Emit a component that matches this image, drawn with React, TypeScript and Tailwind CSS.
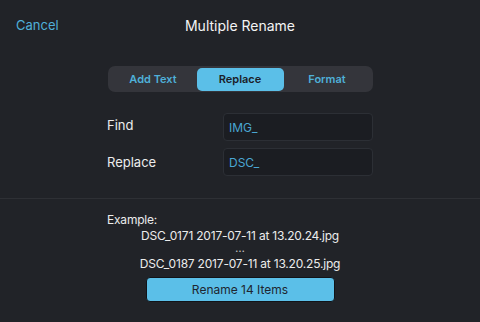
import { useState } from "react";

const tabs = ["Add Text", "Replace", "Format"];

export default function App() {
	const [active, setActive] = useState("Replace");
	const [find, setFind] = useState("IMG_");
	const [replace, setReplace] = useState("DSC_");

	return (
		<div
			className="flex h-[322px] w-[480px] flex-col bg-[#212328] text-white"
			style={{ fontFamily: "Inter, 'Noto Sans', sans-serif" }}
		>
			{/* header */}
			<div className="relative flex h-[50px] items-center justify-center">
				<button type="button" className="absolute left-[16px] top-[16px] text-[13px] text-[#4fb0d8]">
					Cancel
				</button>
				<h1 className="text-[14px] font-normal text-[#f4f4f4]">Multiple Rename</h1>
			</div>

			{/* segmented control */}
			<div className="mt-[16px] flex justify-center">
				<div className="flex h-[26px] w-[265px] items-center rounded-[7px] bg-[#34353b] p-[2px]">
					{tabs.map((t) => (
						<button
							key={t}
							type="button"
							onClick={() => setActive(t)}
							className={
								t === active
									? "h-[23px] flex-1 rounded-[5px] bg-[#5bbfe8] text-[11px] font-semibold text-[#1c2128]"
									: "h-[23px] flex-1 rounded-[5px] text-[11px] font-semibold text-[#4fb0d8]"
							}
						>
							{t}
						</button>
					))}
				</div>
			</div>

			{/* fields */}
			<div className="mx-auto mt-[21px] flex w-[266px] flex-col gap-[7px]">
				<div className="flex items-center justify-between">
					<span className="-mt-[3px] text-[13px] text-[#ececec]">Find</span>
					<input
						value={find}
						onChange={(e) => setFind(e.target.value)}
						className="h-[28px] w-[150px] rounded-[4px] border border-[#2c2f35] bg-[#1b1d22] px-[5px] text-[12px] text-[#4aa6d2] outline-none"
					/>
				</div>
				<div className="flex items-center justify-between">
					<span className="mt-[2px] text-[13px] text-[#ececec]">Replace</span>
					<input
						value={replace}
						onChange={(e) => setReplace(e.target.value)}
						className="h-[28px] w-[150px] rounded-[4px] border border-[#2c2f35] bg-[#1b1d22] px-[5px] text-[12px] text-[#4aa6d2] outline-none"
					/>
				</div>
			</div>

			<div className="mt-[22px] h-px w-full bg-[#2e3035]" />

			{/* example */}
			<div className="mx-auto mt-[13px] flex w-[266px] flex-col text-[12px] tracking-[-0.2px] text-[#ececec]">
				<span className="leading-[16px]">Example:</span>
				<div className="flex flex-col items-center">
					<span className="leading-[16px]">DSC_0171 2017-07-11 at 13.20.24.jpg</span>
					<span className="h-[8px] leading-[8px] text-[#bdbdbd]">...</span>
					<span className="mt-[4px] leading-[16px]">DSC_0187 2017-07-11 at 13.20.25.jpg</span>
				</div>
			</div>

			<div className="mt-[5px] flex justify-center">
				<button
					type="button"
					className="h-[25px] w-[189px] rounded-[4px] border border-[#111318] bg-[#5bbfe8] text-[12px] text-[#1e2630]"
				>
					Rename 14 Items
				</button>
			</div>
		</div>
	);
}
